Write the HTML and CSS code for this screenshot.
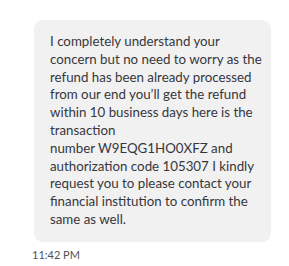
FILE: index.html
```html
<!DOCTYPE html>
<html>
<head>
<meta charset="utf-8">
<link rel="stylesheet" href="styles.css">
</head>
<body>
<div class="chat">
  <div class="prev-time">11:41 PM</div>
  <div class="msg">
    <div class="bubble">I completely understand your concern but no need to worry as the refund has been already processed from our end you’ll get the refund within 10 business days here is the transaction number&nbsp;W9EQG1HO0XFZ and authorization code 105307 I kindly request you to please contact your financial institution to confirm the same as well.</div>
    <div class="time">11:42 PM</div>
  </div>
</div>
</body>
</html>
```
FILE: styles.css
```css
html, body {
  margin: 0;
  padding: 0;
  background: #ffffff;
}
body {
  font-family: Lato, "Noto Sans", sans-serif;
  color: #36373b;
  overflow: hidden;
}
.chat {
  width: 289px;
  height: 266px;
  display: flex;
  flex-direction: column;
}
.prev-time {
  margin-top: -11px;
  height: 14px;
  text-align: right;
  padding-right: 7px;
  font-size: 11px;
  line-height: 14px;
  color: #b0b2b6;
}
.msg {
  margin-top: 17px;
  padding-left: 34px;
  display: flex;
  flex-direction: column;
}
.bubble {
  width: 237px;
  box-sizing: border-box;
  background: #f1f1f2;
  border-radius: 9px;
  padding: 13px 8px 13px 16px;
  font-size: 13.3px;
  line-height: 17.8px;
}
.time {
  margin-top: 6px;
  margin-left: -2px;
  font-size: 11px;
  line-height: 14px;
  color: #515357;
}
```
